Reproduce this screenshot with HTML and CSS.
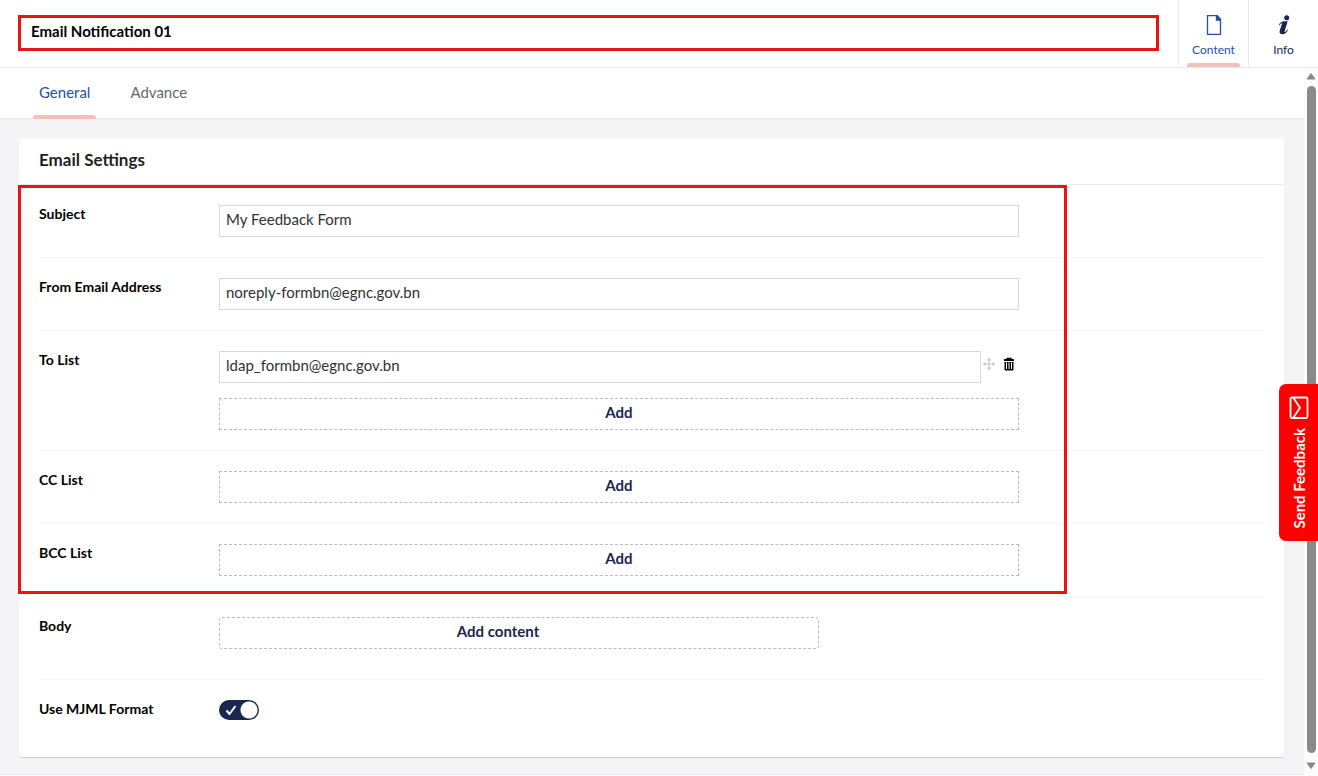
FILE: index.html
```
<!DOCTYPE html>
<html lang="en">
<head>
<meta charset="utf-8">
<title>Email Notification 01</title>
<link rel="stylesheet" href="styles.css">
</head>
<body>
<div class="editor">
  <header class="header">
    <input class="title" type="text" aria-label="Name" value="Email Notification 01">
    <nav class="apps">
      <button class="app app-active" type="button">
        <svg class="app-icon" viewBox="0 0 24 24"><path d="M5.500 2.700h9.500l3.500 3.800v14.800h-13z" fill="none" stroke="#2152a3" stroke-width="1.300"/><path d="M13.800 2.100h1.500l3.800 4v1.600h-5.300z" fill="#2152a3"/></svg>
        <span>Content</span>
      </button>
      <button class="app" type="button">
        <svg class="app-icon" viewBox="0 0 24 24"><circle cx="14.700" cy="4.700" r="2.500" fill="#1b264f"/><path d="M6.800 11.800C8.100 9.500 10 8.300 12.300 8.300h3.400l-3 9.700c-.3 1 .1 1.300.6 1 .7-.5 1.300-1.300 2-2.400l.7.500c-1.400 2.700-3.100 4.200-5.400 4.200-2.600 0-3.500-1.400-2.900-3.500l2.100-6.500c.3-.9 0-1.200-.5-1-.6.200-1.100.9-1.800 2z" fill="#1b264f"/></svg>
        <span>Info</span>
      </button>
    </nav>
  </header>
  <div class="body">
    <main class="main">
      <nav class="tabs">
        <button class="tab tab-active" type="button">General</button>
        <button class="tab" type="button">Advance</button>
      </nav>
      <section class="card">
        <h2 class="card-title">Email Settings</h2>
        <div class="rows">
          <div class="group">
            <div class="row">
              <label class="label" for="subject">Subject</label>
              <div class="field"><input class="input" id="subject" type="text" value="My Feedback Form"></div>
            </div>
            <div class="row">
              <label class="label" for="from">From Email Address</label>
              <div class="field"><input class="input" id="from" type="text" value="noreply-formbn@egnc.gov.bn"></div>
            </div>
            <div class="row">
              <label class="label" for="to">To List</label>
              <div class="field">
                <div class="entry">
                  <input class="input" id="to" type="text" value="ldap_formbn@egnc.gov.bn">
                  <button class="icon-button" type="button" aria-label="Move">
                    <svg viewBox="0 0 14 14" width="14" height="14"><path d="M7 2v10M2 7h10" stroke="#c8c8cb" stroke-width="1.200"/><path d="M7 .5l2.300 3H4.700zM7 13.500l2.300-3H4.700zM.5 7l3-2.300v4.600zM13.500 7l-3-2.300v4.600z" fill="#c8c8cb"/></svg>
                  </button>
                  <button class="icon-button" type="button" aria-label="Remove">
                    <svg viewBox="0 0 14 14" width="14" height="14"><path d="M5 2.200V1.300h4v.900" fill="none" stroke="#000" stroke-width="1.200"/><path d="M2.500 2h9q.5 0 .5.500V4H2V2.500q0-.5.500-.5zM2.500 5h9v7.500q0 1-1 1h-7q-1 0-1-1z" fill="#000"/><path d="M4.500 5.500v6.500M7 5.500v6.500M9.500 5.500v6.500" stroke="#fff" stroke-width="1"/></svg>
                  </button>
                </div>
                <button class="add" type="button">Add</button>
              </div>
            </div>
            <div class="row">
              <span class="label">CC List</span>
              <div class="field"><button class="add" type="button">Add</button></div>
            </div>
            <div class="row">
              <span class="label">BCC List</span>
              <div class="field"><button class="add" type="button">Add</button></div>
            </div>
            <div class="highlight"></div>
          </div>
          <div class="row row-body">
            <span class="label">Body</span>
            <div class="field"><button class="add add-content" type="button">Add content</button></div>
          </div>
          <div class="row row-last">
            <label class="label" for="mjml">Use MJML Format</label>
            <div class="field">
              <span class="toggle">
                <input class="toggle-input" id="mjml" type="checkbox" checked>
                <svg class="toggle-check" viewBox="0 0 12 12"><path d="M1.500 6.500l3 3.500L10.500 2" fill="none" stroke="#fff" stroke-width="2"/></svg>
              </span>
            </div>
          </div>
        </div>
      </section>
    </main>
    <div class="scrollbar">
      <svg viewBox="0 0 10 8" width="10" height="8"><path d="M5 1.500L9 7H1z" fill="#8a8a8a" stroke="#8a8a8a" stroke-linejoin="round"/></svg>
      <div class="thumb"></div>
      <svg viewBox="0 0 10 8" width="10" height="8"><path d="M5 6.500L9 1H1z" fill="#8a8a8a" stroke="#8a8a8a" stroke-linejoin="round"/></svg>
    </div>
  </div>
</div>
<button class="feedback" type="button">
  <svg viewBox="0 0 20 24" width="20" height="24"><path d="M3 1.500h14q1.500 0 1.500 1.500v17.500q0 1.500-1.500 1.500H3q-1.500 0-1.500-1.500V3Q1.500 1.500 3 1.500zM4.500 2l6.500 9.700L4.500 21.500" fill="none" stroke="#fff" stroke-width="1.800" stroke-linejoin="round"/></svg>
  <span class="feedback-text">Send Feedback</span>
</button>
</body>
</html>
```
FILE: styles.css
```
* { box-sizing: border-box; }

body {
  margin: 0;
  background: #fff;
  color: #000;
  font-family: Lato, "Open Sans", sans-serif;
  font-size: 15px;
  line-height: 20px;
}

button, input { font: inherit; }

button {
  padding: 0;
  border: 0;
  background: none;
  color: inherit;
  cursor: pointer;
}

.editor {
  display: flex;
  flex-direction: column;
  height: 100vh;
}

.header {
  display: flex;
  align-items: stretch;
  height: 68px;
  padding-left: 18px;
  border-bottom: 1px solid #e9e9eb;
}

.title {
  flex: 1;
  min-width: 0;
  height: 36px;
  margin: 15px 19px 0 0;
  padding: 0 10px 4px;
  border: 3px solid #e61414;
  font-weight: 700;
  color: #000;
}

.apps { display: flex; }

.app {
  position: relative;
  display: flex;
  flex-direction: column;
  align-items: center;
  width: 70px;
  padding-top: 13px;
  border-left: 1px solid #e9e9eb;
  color: #1b264f;
  font-size: 12px;
  gap: 3px;
}

.app-icon { width: 24px; height: 24px; }

.app-active { color: #2152a3; }

.app-active::after,
.tab-active::after {
  content: "";
  position: absolute;
  bottom: 0;
  left: 8px;
  right: 8px;
  height: 4px;
  border-radius: 3px 3px 0 0;
  background: #f2c0bb;
}

.body {
  flex: 1;
  display: flex;
  min-height: 0;
}

.main {
  flex: 1;
  overflow: hidden;
  background: #f4f3f5;
  border-bottom: 1px solid #e9e9eb;
  margin-bottom: 1px;
}

.tabs {
  display: flex;
  gap: 28px;
  height: 51px;
  padding-left: 33px;
  border-bottom: 1px solid #e9e9eb;
  background: #fff;
}

.tab {
  position: relative;
  padding: 0 6px 2px;
  color: #68676b;
}

.tab-active { color: #2152a3; }

.tab-active::after {
  bottom: -1px;
  left: 0;
  right: 0;
}

.card {
  margin: 19px 20px 0 19px;
  border-radius: 3px;
  background: #fff;
  box-shadow: 0 1px 1px rgba(0, 0, 0, .16);
}

.card-title {
  margin: 0;
  padding: 12px 20px 14px;
  border-bottom: 1px solid #e9e9eb;
  font-size: 17px;
  font-weight: 700;
  color: #1f1f21;
}

.rows { padding: 0 20px; }

.group { position: relative; }

.highlight {
  position: absolute;
  top: 0;
  bottom: 3px;
  left: -21px;
  width: 1049px;
  border: 3px solid #e61414;
  pointer-events: none;
}

.row {
  display: flex;
  padding: 20px 0;
  border-bottom: 1px solid #f5f4f5;
}

.label {
  flex: none;
  width: 180px;
  font-size: 14px;
  line-height: 18px;
  font-weight: 700;
}

.field {
  flex: 0 1 800px;
  display: flex;
  flex-direction: column;
  gap: 15px;
}

.input {
  flex: 1;
  width: 100%;
  min-width: 0;
  height: 32px;
  padding: 0 6px 4px;
  border: 1px solid #d8d7d9;
  border-radius: 0;
  background: #fff;
  color: #303033;
}

.field > .input { flex: none; }

.entry {
  display: flex;
  align-items: center;
}

.icon-button {
  display: flex;
  justify-content: center;
  width: 15px;
  height: 20px;
}

.icon-button + .icon-button {
  width: 14px;
  margin: 0 3px 0 6px;
}

.add {
  width: 100%;
  height: 32px;
  padding-bottom: 4px;
  border: 1px dashed #bbbabf;
  color: #1b264f;
  font-weight: 700;
}

.add-content {
  max-width: 600px;
  padding-right: 42px;
  border-radius: 3px;
}

.row-body { padding-bottom: 30px; }

.row-last {
  padding-bottom: 37px;
  border-bottom: 0;
}

.toggle {
  position: relative;
  width: 40px;
  height: 20px;
}

.toggle-input {
  appearance: none;
  display: block;
  width: 40px;
  height: 20px;
  margin: 0;
  border-radius: 10px;
  background: radial-gradient(circle at 30px 10px, #fff 8px, #1b264f 9px);
}

.toggle-check {
  position: absolute;
  top: 4px;
  left: 6px;
  width: 12px;
  height: 12px;
  pointer-events: none;
}

.scrollbar {
  display: flex;
  flex-direction: column;
  align-items: center;
  gap: 6px;
  width: 14px;
  padding: 4px 0 6px;
  background: #fcfcfc;
}

.scrollbar svg { flex: none; }

.scrollbar svg:last-child { margin-top: 3px; }

.thumb {
  flex: 1;
  width: 9px;
  border-radius: 5px;
  background: #8a8a8a;
}

.feedback {
  position: fixed;
  top: 384px;
  right: 0;
  display: flex;
  flex-direction: column;
  align-items: center;
  gap: 8px;
  width: 39px;
  padding: 12px 0;
  border-radius: 7px 0 0 7px;
  background: #f00;
  color: #fff;
  font-weight: 700;
}

.feedback-text {
  writing-mode: vertical-rl;
  transform: rotate(180deg);
}
```
